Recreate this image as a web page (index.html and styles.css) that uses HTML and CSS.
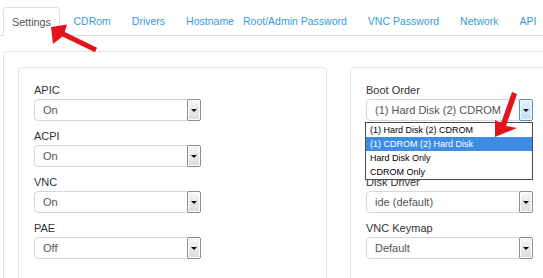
FILE: index.html
```html
<!DOCTYPE html>
<html>
<head>
<meta charset="utf-8">
<link rel="stylesheet" href="styles.css">
</head>
<body>
<nav class="tabs">
  <a class="tab active">Settings</a>
  <a class="tab">CDRom</a>
  <a class="tab">Drivers</a>
  <a class="tab">Hostname</a>
  <a class="tab tight">Root/Admin Password</a>
  <a class="tab">VNC Password</a>
  <a class="tab">Network</a>
  <a class="tab">API</a>
</nav>
<div class="box">
  <div class="cols">
    <div class="panel">
      <div class="group">
        <div class="label">APIC</div>
        <div class="select"><span class="val">On</span><span class="btn"><i class="tri"></i></span></div>
      </div>
      <div class="group">
        <div class="label">ACPI</div>
        <div class="select"><span class="val">On</span><span class="btn"><i class="tri"></i></span></div>
      </div>
      <div class="group">
        <div class="label">VNC</div>
        <div class="select"><span class="val">On</span><span class="btn"><i class="tri"></i></span></div>
      </div>
      <div class="group">
        <div class="label">PAE</div>
        <div class="select"><span class="val">Off</span><span class="btn"><i class="tri"></i></span></div>
      </div>
    </div>
    <div class="panel">
      <div class="group">
        <div class="label">Boot Order</div>
        <div class="select open"><span class="val">(1) Hard Disk (2) CDROM</span><span class="btn hot"><i class="tri"></i></span>
          <ul class="list">
            <li>(1) Hard Disk (2) CDROM</li>
            <li class="sel">(1) CDROM (2) Hard Disk</li>
            <li>Hard Disk Only</li>
            <li>CDROM Only</li>
          </ul>
        </div>
      </div>
      <div class="group">
        <div class="label">&nbsp;</div>
        <div class="select"><span class="val"></span><span class="btn"><i class="tri"></i></span></div>
      </div>
      <div class="group">
        <div class="label">Disk Driver</div>
        <div class="select"><span class="val">ide (default)</span><span class="btn"><i class="tri"></i></span></div>
      </div>
      <div class="group">
        <div class="label">VNC Keymap</div>
        <div class="select"><span class="val">Default</span><span class="btn"><i class="tri"></i></span></div>
      </div>
    </div>
  </div>
</div>
<svg class="arrows" width="543" height="278" viewBox="0 0 543 278">
  <polygon fill="#e3141b" points="51,27 67,24.5 64.7,32 97.1,47.8 94.9,52.3 62.5,36.4 53,44"/>
  <polygon fill="#e3141b" points="495,137 495,120 501,123 512,92 517,94 506,126 517,128"/>
</svg>
</body>
</html>
```
FILE: styles.css
```css
html, body {
  margin: 0;
  padding: 0;
  overflow: hidden;
  width: 543px;
  height: 278px;
  background: #fff;
  font-family: "Liberation Sans", Arial, sans-serif;
}
body { position: relative; }

.tabs {
  display: flex;
  align-items: flex-end;
  padding: 7px 0 0 3px;
  height: 28px;
  border-bottom: 1px solid #ddd;
  box-sizing: content-box;
  width: 700px;
}
.tab {
  display: flex;
  align-items: center;
  height: 28px;
  box-sizing: border-box;
  padding: 0 10.5px;
  font-size: 10.5px;
  color: #3a9ad9;
  white-space: nowrap;
}
.tab.active {
  color: #555;
  background: #fff;
  border: 1px solid #ddd;
  border-bottom: none;
  border-radius: 4px 4px 0 0;
  padding: 0 8px;
  margin-right: 3px;
  height: 29px;
  margin-bottom: -1px;
  font-size: 10.8px;
}
.tab.tight { padding-left: 0; margin-left: -1.5px; }

.box {
  margin: 15px 0 0 3px;
  width: 700px;
  border: 1px solid #e3e3e3;
  border-radius: 4px;
  padding: 15px 14px;
}
.cols {
  display: flex;
  gap: 23px;
}
.panel {
  width: 309px;
  box-sizing: border-box;
  border: 1px solid #e6e6e6;
  border-radius: 4px;
  padding: 15px 15px 40px;
  height: 240px;
}
.group { margin-bottom: 8px; }
.label {
  font-size: 11px;
  line-height: 15px;
  color: #333;
  margin-bottom: 1px;
}
.select {
  position: relative;
  width: 167px;
  height: 22px;
  box-sizing: border-box;
  border: 1px solid #d6d6d6;
  border-radius: 4px;
  background: #fff;
  display: flex;
  align-items: center;
}
.val {
  flex: 1;
  padding-left: 8px;
  font-size: 11px;
  color: #555;
  white-space: nowrap;
}
.btn {
  width: 14px;
  height: 22px;
  margin: -1px -1px -1px 0;
  box-sizing: border-box;
  border: 1px solid #8d8d8d;
  border-radius: 2px;
  background: linear-gradient(#f6f6f6, #dcdcdc);
  box-shadow: inset 0 0 0 1px #fff;
  display: flex;
  align-items: center;
  justify-content: center;
}
.btn.hot {
  border-color: #5b8fbd;
  background: linear-gradient(#e4f2fc, #c4e0f5);
  box-shadow: inset 0 0 0 1px #f2f9ff;
}
.tri {
  width: 0;
  height: 0;
  border-left: 3px solid transparent;
  border-right: 3px solid transparent;
  border-top: 3px solid #111;
}
.list {
  position: absolute;
  left: -2px;
  top: 22px;
  width: 168px;
  box-sizing: border-box;
  margin: 0;
  padding: 0;
  list-style: none;
  border: 1px solid #4a4a4a;
  background: #fff;
  z-index: 2;
}
.list li {
  height: 14px;
  line-height: 14px;
  padding-left: 4px;
  font-size: 9px;
  color: #000;
  white-space: nowrap;
}
.list li.sel {
  background: #3d8ee3;
  color: #fff;
}

.arrows {
  position: absolute;
  left: 0;
  top: 0;
  pointer-events: none;
  z-index: 5;
}
```
